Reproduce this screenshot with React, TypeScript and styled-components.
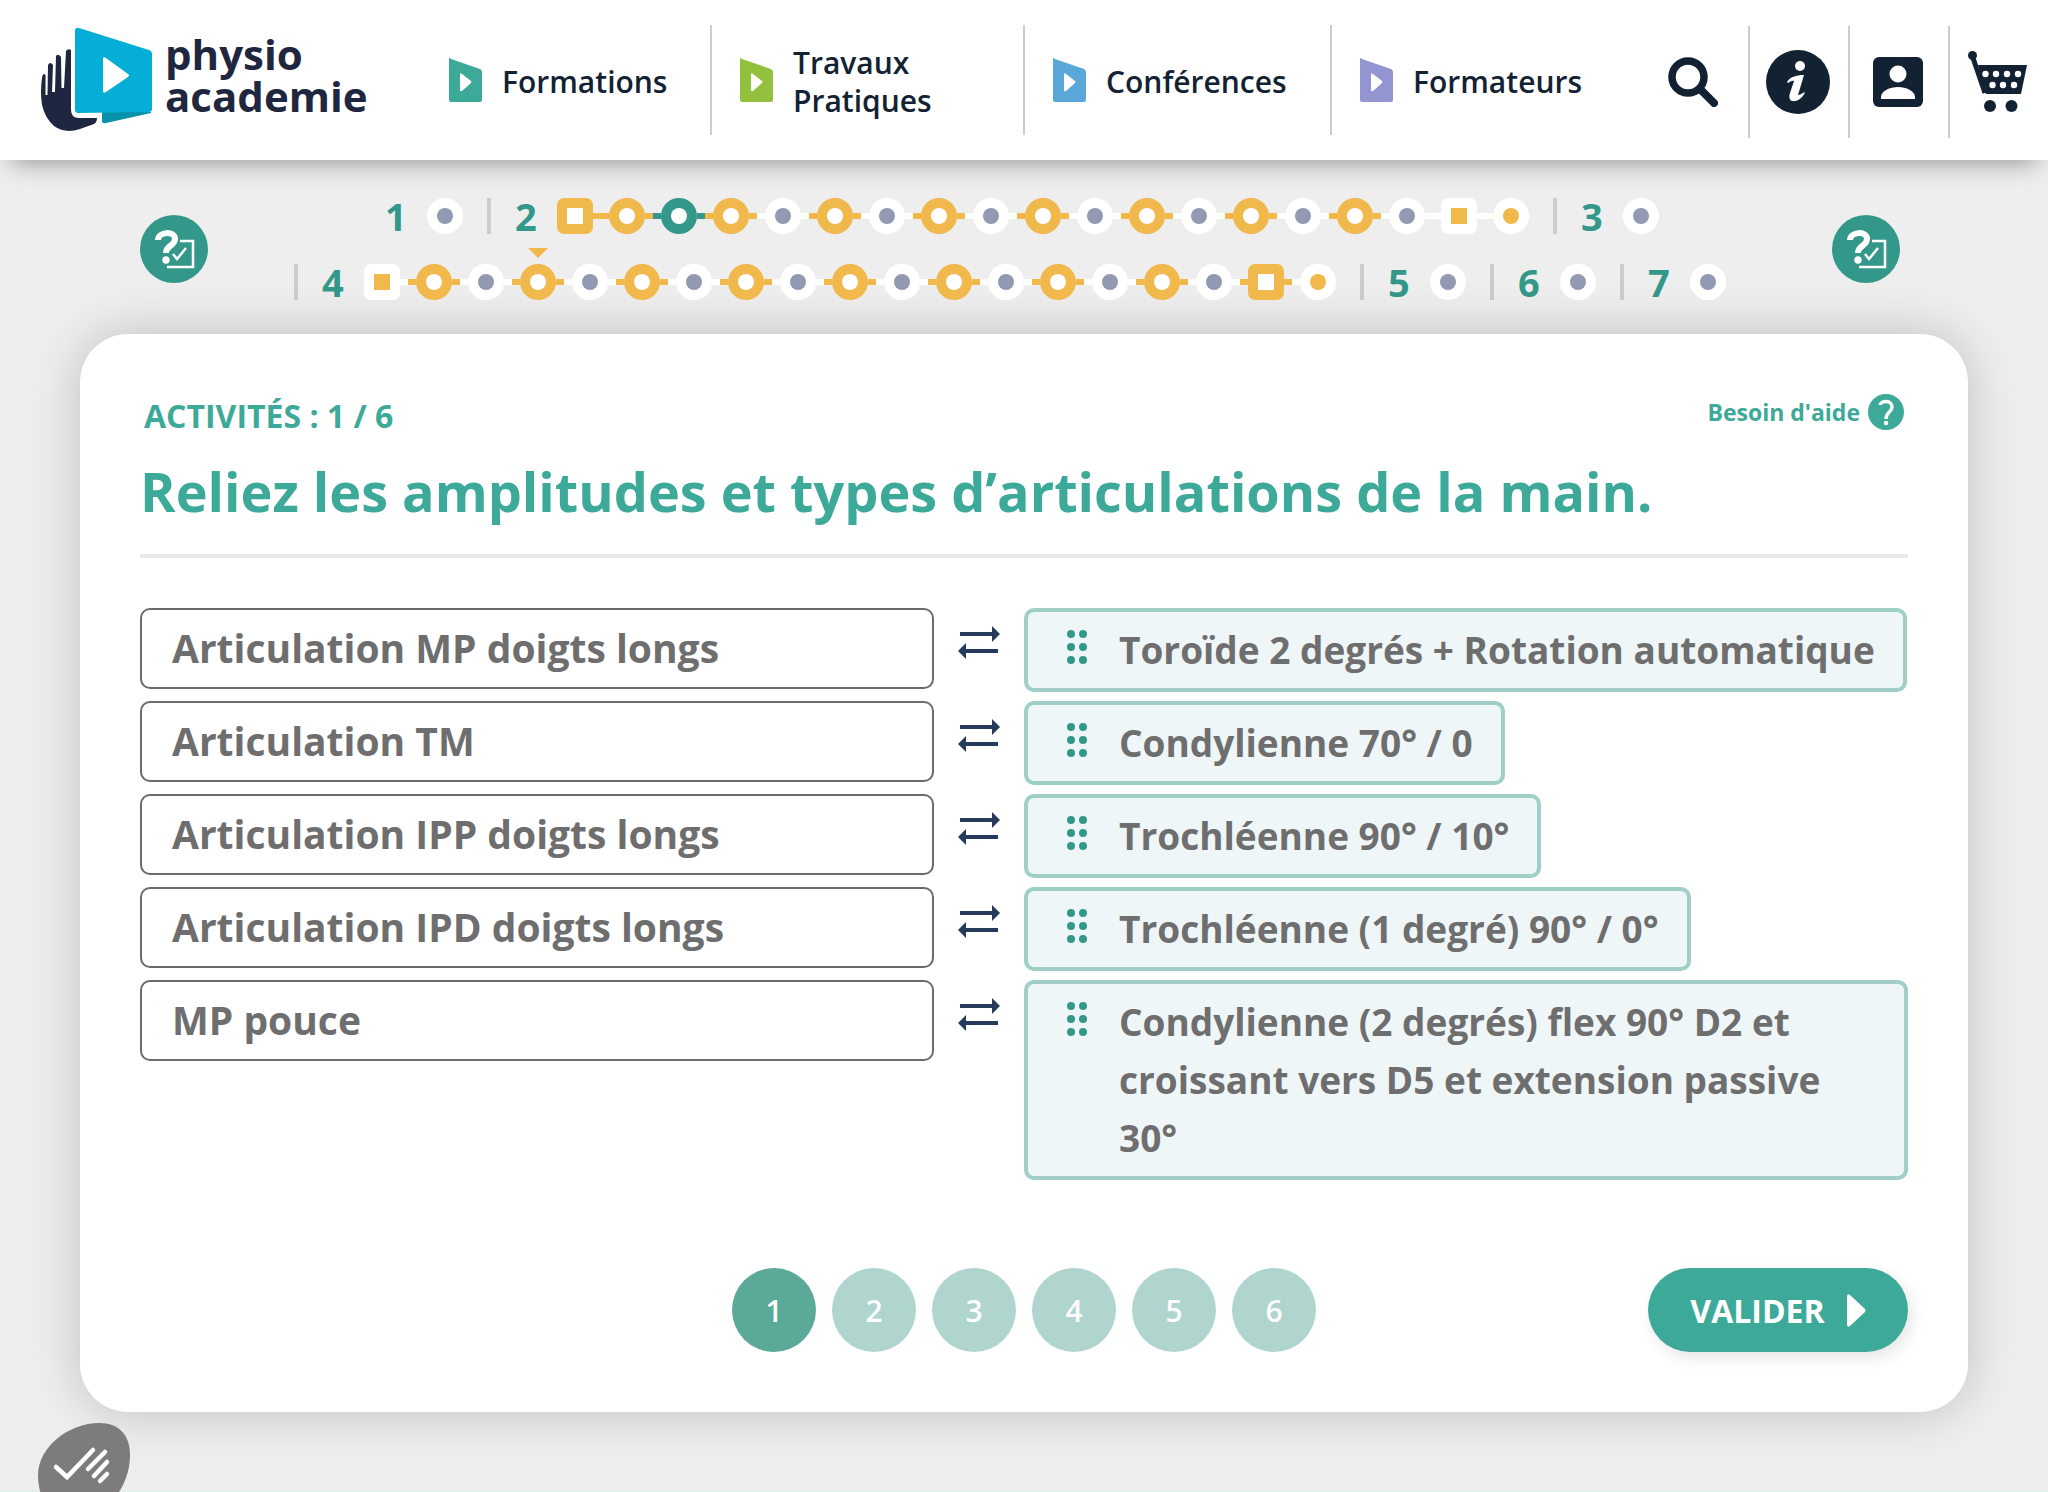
import React from "react";
import styled, { createGlobalStyle } from "styled-components";

const green = "#3da998";
const teal = "#33988a";
const amber = "#f1b84c";
const ink = "#132233";
const grey = "#6e6e6e";

const GlobalStyle = createGlobalStyle`
  *, *::before, *::after { box-sizing: border-box; }
  body {
    margin: 0;
    background: #eeeeee;
    color: ${ink};
    font-family: "Open Sans", "Noto Sans", sans-serif;
    overflow: hidden;
  }
  ul, ol { margin: 0; padding: 0; list-style: none; }
  h1, p { margin: 0; }
  a { color: inherit; text-decoration: none; }
  button { font: inherit; border: 0; padding: 0; cursor: pointer; }
  svg { display: block; flex: none; }
`;

const Page = styled.div`
  min-height: 100vh;
  display: flex;
  flex-direction: column;
`;

/* ---------- Header ---------- */

const Header = styled.header`
  display: flex;
  align-items: center;
  height: 160px;
  background: #ffffff;
  box-shadow: 0 14px 24px -12px rgba(0, 0, 0, 0.4);
`;

const Brand = styled.a`
  display: flex;
  flex: none;
  width: 421px;
  padding-left: 40px;
  gap: 12px;
`;

const BrandName = styled.span`
  display: flex;
  flex-direction: column;
  padding-top: 6px;
  color: #1f2740;
  font-size: 42px;
  font-weight: 700;
  line-height: 42px;
`;

const Nav = styled.nav`
  flex: 1;
`;

const NavList = styled.ul`
  display: grid;
  grid-template-columns: 291fr 313fr 307fr 316fr;
`;

const NavItem = styled.li`
  height: 110px;
  display: flex;
  align-items: center;
  border-right: 2px solid #cccccc;
  &:last-child { border-right: 0; }
`;

const NavLink = styled.a`
  display: flex;
  align-items: center;
  gap: 20px;
  padding: 0 32px 0 28px;
  font-size: 30px;
  font-weight: 600;
  line-height: 38px;
`;

const NavLabel = styled.span`
  padding-top: 4px;
`;

const Tools = styled.ul`
  display: flex;
  flex: none;
  padding-top: 4px;
`;

const Tool = styled.li`
  width: 100px;
  height: 112px;
  display: flex;
  align-items: center;
  justify-content: center;
  padding-right: 2px;
  border-left: 2px solid #cccccc;
  &:first-child {
    border-left: 0;
    padding-right: 10px;
  }
`;

const IconButton = styled.button`
  background: none;
  color: ${ink};
`;

/* ---------- Progress ---------- */

const Progress = styled.div`
  display: flex;
  align-items: center;
  padding: 38px 148px 34px 140px;
`;

const QuizButton = styled.button`
  width: 68px;
  height: 68px;
  flex: none;
  border-radius: 50%;
  background: ${teal};
`;

const Chapters = styled.ol`
  flex: 1;
  display: flex;
  flex-wrap: wrap;
  justify-content: center;
  row-gap: 30px;
  padding-left: 4px;
`;

const Chapter = styled.li`
  display: flex;
  align-items: center;
  height: 36px;
  padding: 0 24px;
  border-left: 4px solid #cccccc;
  &:first-child { border-left: 0; }
`;

const ChapterNumber = styled.span`
  width: 42px;
  color: ${teal};
  font-size: 38px;
  font-weight: 700;
  line-height: 36px;
`;

const Steps = styled.ol`
  display: flex;
`;

type Kind = "done" | "current" | "todo" | "next";
const tones: Record<Kind, { ring: string; dot: string }> = {
  done: { ring: amber, dot: "#ffffff" },
  current: { ring: teal, dot: "#ffffff" },
  todo: { ring: "#ffffff", dot: "#9199b3" },
  next: { ring: "#ffffff", dot: amber },
};

const Step = styled.li<{ $kind: Kind }>`
  position: relative;
  display: flex;
  align-items: center;
  &::before, &::after {
    content: "";
    width: 8px;
    height: 6px;
    background: ${(p) => tones[p.$kind].ring};
  }
  &:first-child::before, &:last-child::after { display: none; }
`;

const StepDot = styled.a<{ $kind: Kind; $square: boolean }>`
  width: 36px;
  height: 36px;
  display: grid;
  place-items: center;
  border-radius: ${(p) => (p.$square ? "7px" : "50%")};
  background: ${(p) => tones[p.$kind].ring};
  &::after {
    content: "";
    width: 16px;
    height: 16px;
    border-radius: ${(p) => (p.$square ? "0" : "50%")};
    background: ${(p) => tones[p.$kind].dot};
  }
`;

const Marker = styled.span`
  position: absolute;
  top: -16px;
  left: 50%;
  margin-left: -10px;
  border: 10px solid transparent;
  border-top-color: ${amber};
  border-bottom: 0;
`;

/* ---------- Card ---------- */

const Card = styled.main`
  margin: 0 80px 78px;
  padding: 60px;
  border-radius: 48px;
  background: #ffffff;
  box-shadow: 0 0 50px rgba(0, 0, 0, 0.2);
`;

const CardTop = styled.div`
  display: flex;
  justify-content: space-between;
  align-items: flex-start;
  padding: 0 4px;
`;

const Counter = styled.p`
  padding-top: 2px;
  color: ${green};
  font-size: 32px;
  font-weight: 700;
  line-height: 40px;
`;

const HelpLink = styled.a`
  display: flex;
  align-items: center;
  gap: 8px;
  color: ${green};
  font-size: 23px;
  font-weight: 700;
  line-height: 36px;
`;

const Title = styled.h1`
  padding: 16px 0 24px;
  border-bottom: 4px solid #eaeaea;
  color: ${green};
  font-size: 54px;
  font-weight: 700;
  line-height: 78px;
`;

const Pairs = styled.ul`
  display: grid;
  row-gap: 9px;
  padding-top: 50px;
`;

const Pair = styled.li`
  display: grid;
  grid-template-columns: calc(50% - 90px) 90px 50%;
  align-items: start;
  color: ${grey};
  font-weight: 700;
  line-height: 58px;
`;

const Term = styled.div`
  padding: 9px 30px 10px;
  border: 2px solid #6b6b6b;
  border-radius: 10px;
  font-size: 39px;
`;

const Swap = styled.span`
  display: grid;
  justify-content: center;
  padding-top: 18px;
`;

const Answer = styled.button`
  display: flex;
  gap: 32px;
  justify-self: start;
  padding: 9px 28px 9px 39px;
  border: 4px solid #9fcfc6;
  border-radius: 10px;
  background: #eef6f7;
  color: inherit;
  font-size: 37px;
  text-align: left;
  cursor: grab;
`;

const Grip = styled.svg`
  margin-top: 9px;
`;

const Footer = styled.div`
  display: grid;
  grid-template-columns: 1fr auto 1fr;
  align-items: center;
  padding-top: 88px;
`;

const Pager = styled.nav`
  grid-column: 2;
  display: flex;
  gap: 16px;
`;

const PageButton = styled.button<{ $active: boolean }>`
  width: 84px;
  height: 84px;
  border-radius: 50%;
  background: ${(p) => (p.$active ? "#5aa999" : "#b0d5ce")};
  color: #ffffff;
  font-size: 30px;
  font-weight: 600;
`;

const Validate = styled.button`
  justify-self: end;
  display: flex;
  align-items: center;
  justify-content: center;
  gap: 22px;
  width: 260px;
  height: 84px;
  border-radius: 42px;
  background: ${green};
  color: #ffffff;
  font-size: 32px;
  font-weight: 700;
  box-shadow: 4px 6px 16px rgba(0, 0, 0, 0.1);
`;

const NextSection = styled.div`
  flex: 1;
  background: #e2f0ec;
`;

const CookieButton = styled.button`
  position: fixed;
  left: 37px;
  bottom: -26px;
  background: none;
`;

/* ---------- Drawings ---------- */

const LogoMark = () => (
  <svg width="113" height="106" viewBox="40 27 113 106" aria-hidden="true">
    <path
      d="M71 50 Q68 48 66 51 L64 88 L61.500 88 L61 57 Q58 53 56 56 L55 92 L52 92 L53 65 Q50 61 48 65 L47.500 95 L45.500 95 L45.500 75 Q43 72 42 78 Q40 92 42 105 Q45 118 54 126 Q65 134 80 129 L94 124 Q97 122 97 118 L78 118 Q71 117 71 110 Z"
      fill="#1f2740"
    />
    <path d="M102 112 L151 112 L151 113 L106 123 Q102 124 102 121 Z" fill="#0891a8" />
    <path d="M75 30 Q76 27 79 28 L149 50 Q152 51 152 54 L152 109 Q152 112 149 112 L78 113 Q75 113 75 110 Z" fill="#05aed6" />
    <path d="M103 59 Q103 56 106 58 L128 74 Q130 75 128 77 L106 92 Q103 94 103 91 Z" fill="#ffffff" />
  </svg>
);

const NavMark = ({ color }: { color: string }) => (
  <svg width="33" height="44" viewBox="0 0 33 44" aria-hidden="true">
    <path d="M0 1 Q0 -1 2 1 L31 11 Q33 12 33 14 L33 42 Q33 44 31 44 L2 44 Q0 44 0 42 Z" fill={color} />
    <path d="M11 17 Q11 14 13 16 L22 23 Q23 24 22 25 L13 33 Q11 34 11 32 Z" fill="#ffffff" />
  </svg>
);

const SearchIcon = () => (
  <svg width="50" height="50" viewBox="0 0 50 50" fill="none" stroke="currentColor" aria-hidden="true">
    <circle cx="20" cy="20" r="16" strokeWidth="7.5" />
    <path d="M32 32 L46 46" strokeWidth="8" strokeLinecap="round" />
  </svg>
);

const InfoIcon = () => (
  <svg width="64" height="64" viewBox="0 0 64 64" aria-hidden="true">
    <circle cx="32" cy="32" r="32" fill="currentColor" />
    <circle cx="34" cy="16" r="5" fill="#ffffff" />
    <path d="M21 32 C24 27 30 25 38 25 L32 45 C34 45 36 43 39 42 C37 48 31 52 26 51 C23 50 23 46 24 43 L28 31 C26 30 24 32 22 33 Z" fill="#ffffff" />
  </svg>
);

const AccountIcon = () => (
  <svg width="50" height="50" viewBox="0 0 50 50" aria-hidden="true">
    <rect width="50" height="50" rx="6" fill="currentColor" />
    <circle cx="25" cy="17" r="8.5" fill="#ffffff" />
    <path d="M8 42 V40 C8 34 17 30 25 30 C33 30 42 34 42 40 V42 Z" fill="#ffffff" />
  </svg>
);

const CartIcon = () => (
  <svg width="60" height="62" viewBox="0 0 60 62" aria-hidden="true">
    <circle cx="4.5" cy="4.5" r="4.5" fill="currentColor" />
    <path d="M4 4 L17 42" stroke="currentColor" strokeWidth="5" fill="none" />
    <path d="M10 14 H59 L53 43 H18 Z" fill="currentColor" />
    {[17.5, 28, 39, 50].map((x) => <circle key={x} cx={x} cy="23" r="3.2" fill="#ffffff" />)}
    {[24.5, 35, 46].map((x) => <circle key={x} cx={x} cy="34" r="3.2" fill="#ffffff" />)}
    <circle cx="22" cy="55" r="6" fill="currentColor" />
    <circle cx="43.5" cy="55" r="6" fill="currentColor" />
  </svg>
);

const QuizIcon = () => (
  <svg width="68" height="68" viewBox="0 0 68 68" fill="none" stroke="#ffffff" aria-hidden="true">
    <path d="M40 26 H53 V52 H27" strokeWidth="2.5" />
    <path d="M33 39 L37 44 L46 33" strokeWidth="2.5" />
    <path d="M18 25 C18 17 35 15 35 24 C35 31 26 30 26 38" strokeWidth="6" />
    <circle cx="26" cy="45" r="3.7" fill="#ffffff" stroke="none" />
  </svg>
);

const HelpIcon = () => (
  <svg width="36" height="36" viewBox="0 0 36 36" fill="none" aria-hidden="true">
    <circle cx="18" cy="18" r="18" fill={green} />
    <path d="M12 11 C13 6 24 6 24 13 C24 18 18 18 18 25" stroke="#ffffff" strokeWidth="3.5" />
    <circle cx="18" cy="29" r="2.2" fill="#ffffff" />
  </svg>
);

const SwapIcon = () => (
  <svg width="42" height="34" viewBox="0 0 42 34" fill="#263a5c" aria-hidden="true">
    <path d="M2 6 H34 V0 L42 8 L34 16 V10 H2 Z" />
    <path d="M40 23 H8 V17 L0 25 L8 33 V27 H40 Z" />
  </svg>
);

const GripIcon = () => (
  <Grip width="20" height="34" viewBox="0 0 20 34" aria-hidden="true">
    {[4, 17, 30].map((y) => (
      <g key={y} fill={teal}>
        <circle cx="4" cy={y} r="4" />
        <circle cx="16" cy={y} r="4" />
      </g>
    ))}
  </Grip>
);

const CookieIcon = () => (
  <svg width="94" height="95" viewBox="0 0 94 95" fill="none" aria-hidden="true">
    <path d="M62 0 C83 0 93 13 93 32 C93 64 70 95 34 95 C12 95 1 74 1 52 C1 24 32 0 62 0 Z" fill="#7c7c7c" />
    <g stroke="#ffffff" strokeWidth="4.5" strokeLinecap="round">
      <path d="M19 44 L30 54 L56 27" />
      <path d="M51 46 L68 29" />
      <path d="M57 53 L70 39" />
      <path d="M63 58 L70 51" />
    </g>
  </svg>
);

/* ---------- Data ---------- */

const sections = [
  { label: "Formations", color: "#3da998" },
  { label: "Travaux Pratiques", color: "#93c03d" },
  { label: "Conférences", color: "#5aa8da" },
  { label: "Formateurs", color: "#9295cf" },
];

// d: done, c: current, t: to do, n: next; capitals are square steps.
const chapters = ["t", "DdcdtdtdtdtdtdtdtNn", "t", "NdtdtdtdtdtdtdtdtDn", "t", "t", "t"];
const kinds: Record<string, Kind> = { d: "done", c: "current", t: "todo", n: "next" };

const pairs = [
  ["Articulation MP doigts longs", "Toroïde 2 degrés + Rotation automatique"],
  ["Articulation TM", "Condylienne 70° / 0"],
  ["Articulation IPP doigts longs", "Trochléenne 90° / 10°"],
  ["Articulation IPD doigts longs", "Trochléenne (1 degré) 90° / 0°"],
  ["MP pouce", "Condylienne (2 degrés) flex 90° D2 et croissant vers D5 et extension passive 30°"],
];

export default function App() {
  const [page, setPage] = React.useState(1);
  return (
    <Page>
      <GlobalStyle />
      <Header>
        <Brand href="#accueil">
          <LogoMark />
          <BrandName>
            <span>physio</span>
            <span>academie</span>
          </BrandName>
        </Brand>
        <Nav>
          <NavList>
            {sections.map((s) => (
              <NavItem key={s.label}>
                <NavLink href="#section">
                  <NavMark color={s.color} />
                  <NavLabel>{s.label}</NavLabel>
                </NavLink>
              </NavItem>
            ))}
          </NavList>
        </Nav>
        <Tools>
          <Tool><IconButton aria-label="Rechercher"><SearchIcon /></IconButton></Tool>
          <Tool><IconButton aria-label="Informations"><InfoIcon /></IconButton></Tool>
          <Tool><IconButton aria-label="Mon compte"><AccountIcon /></IconButton></Tool>
          <Tool><IconButton aria-label="Panier"><CartIcon /></IconButton></Tool>
        </Tools>
      </Header>

      <Progress>
        <QuizButton aria-label="Quiz précédent"><QuizIcon /></QuizButton>
        <Chapters>
          {chapters.map((steps, c) => (
            <Chapter key={c}>
              <ChapterNumber>{c + 1}</ChapterNumber>
              <Steps>
                {[...steps].map((code, i) => {
                  const kind = kinds[code.toLowerCase()];
                  return (
                    <Step key={i} $kind={kind}>
                      <StepDot
                        href="#etape"
                        aria-label={`Étape ${i + 1}`}
                        $kind={kind}
                        $square={code !== code.toLowerCase()}
                      />
                      {c === 3 && i === 3 && <Marker />}
                    </Step>
                  );
                })}
              </Steps>
            </Chapter>
          ))}
        </Chapters>
        <QuizButton aria-label="Quiz suivant"><QuizIcon /></QuizButton>
      </Progress>

      <Card>
        <CardTop>
          <Counter>ACTIVITÉS : 1 / 6</Counter>
          <HelpLink href="#aide">
            Besoin d'aide
            <HelpIcon />
          </HelpLink>
        </CardTop>
        <Title>Reliez les amplitudes et types d’articulations de la main.</Title>
        <Pairs>
          {pairs.map(([term, answer]) => (
            <Pair key={term}>
              <Term>{term}</Term>
              <Swap><SwapIcon /></Swap>
              <Answer>
                <GripIcon />
                <span>{answer}</span>
              </Answer>
            </Pair>
          ))}
        </Pairs>
        <Footer>
          <Pager aria-label="Activités">
            {[1, 2, 3, 4, 5, 6].map((n) => (
              <PageButton key={n} $active={n === page} onClick={() => setPage(n)}>{n}</PageButton>
            ))}
          </Pager>
          <Validate>
            VALIDER
            <svg width="19" height="33" viewBox="0 0 19 33" aria-hidden="true">
              <path d="M0 3 Q0 -1 3 1 L18 15 Q19 16 18 18 L3 32 Q0 34 0 30 Z" fill="#ffffff" />
            </svg>
          </Validate>
        </Footer>
      </Card>
      <NextSection />

      <CookieButton aria-label="Gérer les cookies"><CookieIcon /></CookieButton>
    </Page>
  );
}
